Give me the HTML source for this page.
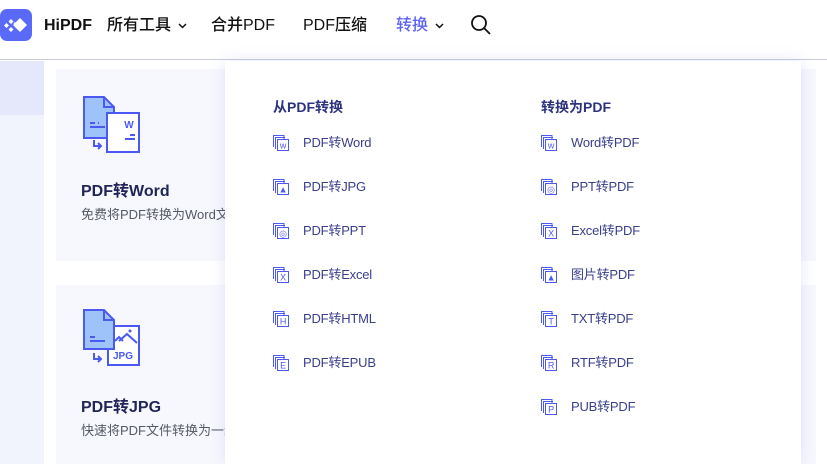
<!DOCTYPE html>
<html><head><meta charset="utf-8"><style>
*{margin:0;padding:0;box-sizing:border-box}
body{width:827px;height:464px;overflow:hidden;background:#fff;font-family:"Liberation Sans","Noto Sans CJK SC",sans-serif;position:relative}
.hdr{position:absolute;left:0;top:0;width:827px;height:60px;background:#fff;border-bottom:1px solid #c9ccd9}
.logo{position:absolute;left:0;top:9px;width:32px;height:32px;border-radius:7px;background:#5a6af8}
.nav{position:absolute;top:16px;font-size:16px;line-height:20px;height:20px;color:#111;font-weight:500;white-space:nowrap}
.nav svg{vertical-align:middle;margin-left:7px}
.side{position:absolute;left:0;top:61px;width:44px;height:403px;background:#f1f3fd}
.side .a{position:absolute;left:0;top:0;width:44px;height:54px;background:#e5e8fb}
.card{position:absolute;background:#f7f8fd}
.ct{position:absolute;font-size:16px;font-weight:bold;color:#1f2559}
.cd{position:absolute;font-size:13px;color:#555a66;white-space:nowrap}
.dd{position:absolute;left:225px;top:61px;width:576px;height:403px;background:#fff;box-shadow:0 0 14px rgba(110,120,230,.18);overflow:hidden}
.h{position:absolute;font-size:14px;font-weight:bold;color:#2e3380}
.it{position:absolute;font-size:13px;color:#3a408c;white-space:nowrap;line-height:16px;letter-spacing:-0.2px}
.it svg{position:absolute;left:-30px;top:0}
</style></head><body>
<div class="side"><div class="a"></div></div>
<div class="card" style="left:56px;top:69px;width:760px;height:192px"></div>
<div class="card" style="left:56px;top:285px;width:760px;height:179px"></div>

<svg style="position:absolute;left:83px;top:96px" width="58" height="58" viewBox="0 0 58 58">
<path d="M1 1H21L31 11V42H1Z" fill="#9ec3fb" stroke="#4b59f2" stroke-width="2"/>
<path d="M21 1V11H31" fill="none" stroke="#4b59f2" stroke-width="2"/>
<rect x="24" y="17" width="32" height="39" fill="#fff" stroke="#4b59f2" stroke-width="2"/>
<path d="M7 27H12M15 27H16M7 31H22M11 44V50H17M15 47L18 50L15 53M42 43H52M47 39H52" stroke="#4b59f2" stroke-width="2" fill="none"/>
<text x="46" y="32" font-size="10" font-weight="bold" fill="#4b59f2" text-anchor="middle" font-family="Liberation Sans">W</text>
</svg>
<div class="ct" style="left:81px;top:177px">PDF转Word</div>
<div class="cd" style="left:81px;top:204px">免费将PDF转换为Word文</div>

<svg style="position:absolute;left:83px;top:309px" width="58" height="58" viewBox="0 0 58 58">
<rect x="25" y="17" width="31" height="39" fill="#fff" stroke="#4b59f2" stroke-width="2"/>
<path d="M1 1H21L31 11V40H1Z" fill="#9ec3fb" stroke="#4b59f2" stroke-width="2"/>
<path d="M21 1V11H31" fill="none" stroke="#4b59f2" stroke-width="2"/>
<path d="M7 28H12M7 32H22M11 44V50H17M15 47L18 50L15 53M32 32L36 28L40 32M36 32L44 25L54 34" stroke="#4b59f2" stroke-width="2" fill="none"/>
<circle cx="47" cy="22" r="1.5" fill="#4b59f2"/>
<text x="40" y="50" font-size="10" font-weight="bold" fill="#4b59f2" text-anchor="middle" font-family="Liberation Sans">JPG</text>
</svg>
<div class="ct" style="left:81px;top:393px">PDF转JPG</div>
<div class="cd" style="left:81px;top:420px">快速将PDF文件转换为一组</div>

<div class="hdr">
<div class="logo"><svg width="32" height="32" viewBox="0 0 32 32"><path d="M20 9L27 16L20 23L13 16Z" fill="#fff"/><path d="M11 10L13.5 12.5L11 15L8.5 12.5ZM6.5 14L9 16.5L6.5 19L4 16.5ZM11 18L13.5 20.5L11 23L8.5 20.5ZM15 13L16.5 14.5L15 16L13.5 14.5Z" fill="#fff"/></svg></div>
<div class="nav" style="left:44px;font-weight:bold">HiPDF</div>
<div class="nav" style="left:107px">所有工具<svg width="9" height="6" viewBox="0 0 9 6"><path d="M1 1L4.5 4.5L8 1" stroke="#111" stroke-width="1.5" fill="none"/></svg></div>
<div class="nav" style="left:211px">合并PDF</div>
<div class="nav" style="left:303px">PDF压缩</div>
<div class="nav" style="left:396px;color:#5b62f5">转换<svg width="9" height="6" viewBox="0 0 9 6"><path d="M1 1L4.5 4.5L8 1" stroke="#111" stroke-width="1.5" fill="none"/></svg></div>
<svg style="position:absolute;left:470px;top:14px" width="22" height="22" viewBox="0 0 22 22"><circle cx="9" cy="9" r="7" fill="none" stroke="#111" stroke-width="1.8"/><path d="M14 14L20 20" stroke="#111" stroke-width="1.8"/></svg>
</div>

<div class="dd">
<div class="h" style="left:48px;top:36px">从PDF转换</div>
<div class="h" style="left:316px;top:36px">转换为PDF</div>
</div>
<div id="items"></div>
<script>
function ic(l){return '<svg width="16" height="16" viewBox="0 0 16 16"><path d="M0.5 12V0.5H11V4" fill="none" stroke="#4b59f2"/><path d="M2.5 14V2.5H12" fill="none" stroke="#4b59f2"/><rect x="4.5" y="4.5" width="11" height="11" fill="#fff" stroke="#4b59f2"/><text x="10" y="13.5" font-size="9" fill="#4b59f2" text-anchor="middle" font-family="Liberation Sans">'+l+'</text></svg>';}
var L=[["PDF转Word","w"],["PDF转JPG","▲"],["PDF转PPT","◎"],["PDF转Excel","X"],["PDF转HTML","H"],["PDF转EPUB","E"]];
var R=[["Word转PDF","w"],["PPT转PDF","◎"],["Excel转PDF","X"],["图片转PDF","▲"],["TXT转PDF","T"],["RTF转PDF","R"],["PUB转PDF","P"]];
var h="";
L.forEach(function(a,i){h+='<div class="it" style="left:303px;top:'+(135+44*i)+'px">'+ic(a[1])+a[0]+'</div>';});
R.forEach(function(a,i){h+='<div class="it" style="left:571px;top:'+(135+44*i)+'px">'+ic(a[1])+a[0]+'</div>';});
document.getElementById("items").innerHTML=h;
</script>
</body></html>
